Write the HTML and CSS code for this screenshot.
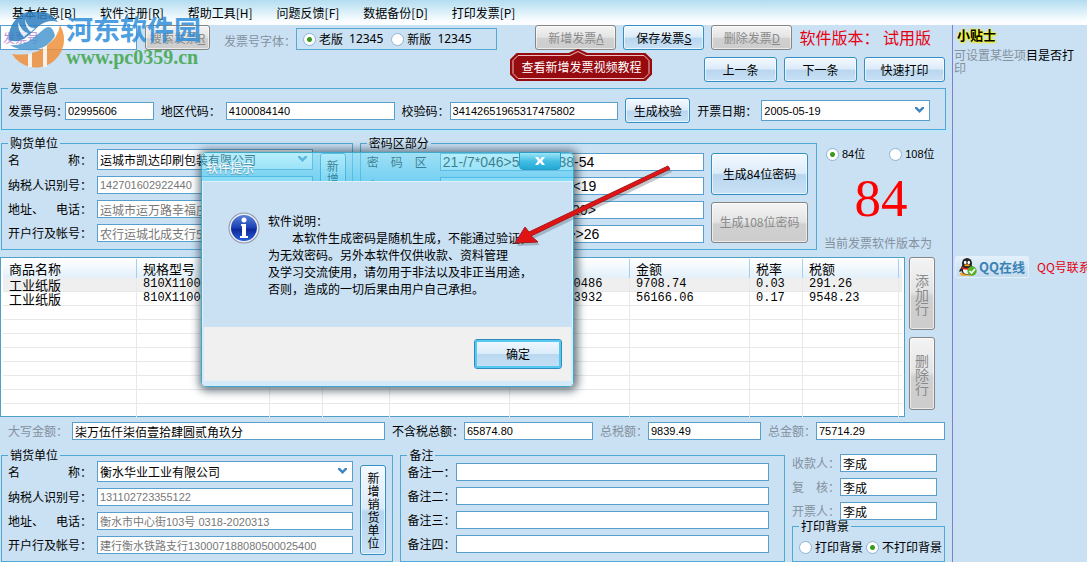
FILE: index.html
```html
<!DOCTYPE html>
<html lang="zh-CN">
<head>
<meta charset="utf-8">
<title>发票打印软件</title>
<link rel="stylesheet" href="styles.css">
</head>
<body>
<nav class="menu">
  <a href="#">基本信息[B]</a>
  <a href="#">软件注册[R]</a>
  <a href="#">帮助工具[H]</a>
  <a href="#">问题反馈[F]</a>
  <a href="#">数据备份[D]</a>
  <a href="#">打印发票[P]</a>
</nav>
<div class="app">
  <main class="main">
    <section class="toolbar">
      <div class="tools-left">
        <input class="search" type="text" value="发票号" aria-label="发票号">
        <button class="btn gray search-btn" type="button">搜索发票<u>R</u></button>
        <span class="dim font-label">发票号字体：</span>
        <div class="font-group">
          <label class="radio"><input type="radio" name="font" checked>老版&ensp;<span class="latin">12345</span></label>
          <label class="radio"><input type="radio" name="font">新版&ensp;<span class="latin">12345</span></label>
        </div>
      </div>
      <div class="tools-right">
        <div class="tool-row">
          <div class="anchor">
            <button class="btn gray w80" type="button" disabled>新增发票<u>A</u></button>
            <a class="bubble" href="#">
              <svg viewBox="0 0 142 32" width="142" height="32" aria-hidden="true">
                <path d="M7 5H59L68 1L77 5H135L141 11V25L135 31H7L1 25V11Z" fill="#960b10" stroke="#960b10" stroke-width="2"/>
                <path d="M8 6.500H60L68 2.500L76 6.500H134L139 11.500V24.500L134 29.500H8L3 24.500V11.500Z" fill="none" stroke="#eebcbc" stroke-width="1"/>
              </svg>
              <span>查看新增发票视频教程</span>
            </a>
          </div>
          <button class="btn w80" type="button">保存发票<u>S</u></button>
          <button class="btn gray w80" type="button" disabled>删除发票<u>D</u></button>
          <span class="version">软件版本：&nbsp;试用版</span>
        </div>
        <div class="tool-row">
          <button class="btn w73" type="button">上一条</button>
          <button class="btn w73" type="button">下一条</button>
          <button class="btn w80" type="button">快速打印</button>
        </div>
      </div>
    </section>

    <fieldset class="group info">
      <legend>发票信息</legend>
      <div class="info-grid">
        <label for="no">发票号码：</label>
        <input class="num" id="no" type="text" value="02995606">
        <label class="pad" for="area">地区代码：</label>
        <input class="num" id="area" type="text" value="4100084140">
        <label class="pad" for="check">校验码：</label>
        <input class="num" id="check" type="text" value="34142651965317475802">
        <button class="btn" type="button">生成校验</button>
        <label class="pad" for="date">开票日期：</label>
        <span class="combo"><select class="num" id="date"><option>2005-05-19</option></select><svg viewBox="0 0 9 6" width="9" height="6"><path d="M0 0H2L4.500 2.500L7 0H9V1.500L4.500 6L0 1.500Z" fill="#3f86c0"/></svg></span>
      </div>
    </fieldset>

    <section class="middle">
      <fieldset class="group buyer">
        <legend>购货单位</legend>
        <div class="party">
          <div class="party-grid">
            <label for="b1">名&emsp;&emsp;&emsp;&emsp;称：</label>
            <span class="combo"><select id="b1"><option>运城市凯达印刷包装有限公司</option></select><svg viewBox="0 0 9 6" width="9" height="6"><path d="M0 0H2L4.500 2.500L7 0H9V1.500L4.500 6L0 1.500Z" fill="#3f86c0"/></svg></span>
            <label for="b2">纳税人识别号：</label>
            <input class="soft num" id="b2" type="text" value="142701602922440">
            <label for="b3">地址、&emsp;电话：</label>
            <input class="soft" id="b3" type="text" value="运城市运万路幸福庄">
            <label for="b4">开户行及帐号：</label>
            <input class="soft" id="b4" type="text" value="农行运城北成支行5">
          </div>
          <button class="btn tall" type="button">新增购货单位</button>
        </div>
      </fieldset>
      <fieldset class="group cipher">
        <legend>密码区部分</legend>
        <div class="cipher-body">
          <div class="cipher-grid">
            <label for="c1">密&emsp;码&emsp;区</label>
            <input id="c1" type="text" value="21-/7*046&gt;51207438-54">
            <label for="c2">密&emsp;码&emsp;区</label>
            <input id="c2" type="text" value="341-05&gt;5954082974&lt;19">
            <label for="c3">密&emsp;码&emsp;区</label>
            <input id="c3" type="text" value="6027481935502716-20&gt;">
            <label for="c4">密&emsp;码&emsp;区</label>
            <input id="c4" type="text" value="8150392746108352&gt;&gt;26">
          </div>
          <div class="cipher-btns">
            <button class="btn" type="button">生成84位密码</button>
            <button class="btn gray" type="button" disabled>生成108位密码</button>
          </div>
        </div>
      </fieldset>
      <div class="digits">
        <div class="digit-row">
          <label class="radio"><input type="radio" name="bits" checked><span class="mix">84位</span></label>
          <label class="radio"><input type="radio" name="bits"><span class="mix">108位</span></label>
        </div>
        <div class="big">84</div>
        <div class="dim">当前发票软件版本为</div>
      </div>
    </section>

    <section class="goods">
      <div class="table-box">
        <table>
          <colgroup><col class="c-name"><col class="c-spec"><col class="c-unit"><col class="c-qty"><col class="c-price"><col class="c-price"><col class="c-price"><col class="c-unit"><col class="c-tax"><col></colgroup>
          <thead><tr><th>商品名称</th><th>规格型号</th><th></th><th></th><th></th><th></th><th>金额</th><th>税率</th><th>税额</th><th></th></tr></thead>
          <tbody>
            <tr class="on"><td class="cjk">工业纸版</td><td>810X1100</td><td></td><td></td><td></td><td>0.9708740486</td><td>9708.74</td><td>0.03</td><td>291.26</td><td></td></tr>
            <tr><td class="cjk">工业纸版</td><td>810X1100</td><td></td><td></td><td></td><td>5.6166063932</td><td>56166.06</td><td>0.17</td><td>9548.23</td><td></td></tr>
            <tr><td></td><td></td><td></td><td></td><td></td><td></td><td></td><td></td><td></td><td></td></tr>
            <tr><td></td><td></td><td></td><td></td><td></td><td></td><td></td><td></td><td></td><td></td></tr>
            <tr><td></td><td></td><td></td><td></td><td></td><td></td><td></td><td></td><td></td><td></td></tr>
            <tr><td></td><td></td><td></td><td></td><td></td><td></td><td></td><td></td><td></td><td></td></tr>
            <tr><td></td><td></td><td></td><td></td><td></td><td></td><td></td><td></td><td></td><td></td></tr>
            <tr><td></td><td></td><td></td><td></td><td></td><td></td><td></td><td></td><td></td><td></td></tr>
            <tr><td></td><td></td><td></td><td></td><td></td><td></td><td></td><td></td><td></td><td></td></tr>
            <tr class="last"><td></td><td></td><td></td><td></td><td></td><td></td><td></td><td></td><td></td><td></td></tr>
          </tbody>
        </table>
      </div>
      <div class="row-btns">
        <button class="btn gray" type="button">添加行</button>
        <button class="btn gray" type="button">删除行</button>
      </div>
    </section>

    <section class="totals">
      <label class="dim" for="t1">大写金额：</label>
      <input id="t1" type="text" value="柒万伍仟柒佰壹拾肆圆贰角玖分">
      <label class="pad" for="t2">不含税总额：</label>
      <input class="num" id="t2" type="text" value="65874.80">
      <label class="pad dim" for="t3">总税额：</label>
      <input class="num" id="t3" type="text" value="9839.49">
      <label class="pad dim" for="t4">总金额：</label>
      <input class="num" id="t4" type="text" value="75714.29">
    </section>

    <section class="bottom">
      <fieldset class="group seller">
        <legend>销货单位</legend>
        <div class="party">
          <div class="party-grid">
            <label for="s1">名&emsp;&emsp;&emsp;&emsp;称：</label>
            <span class="combo"><select id="s1"><option>衡水华业工业有限公司</option></select><svg viewBox="0 0 9 6" width="9" height="6"><path d="M0 0H2L4.500 2.500L7 0H9V1.500L4.500 6L0 1.500Z" fill="#3f86c0"/></svg></span>
            <label for="s2">纳税人识别号：</label>
            <input class="soft num" id="s2" type="text" value="131102723355122">
            <label for="s3">地址、&emsp;电话：</label>
            <input class="soft num" id="s3" type="text" value="衡水市中心街103号 0318-2020313">
            <label for="s4">开户行及帐号：</label>
            <input class="soft num" id="s4" type="text" value="建行衡水铁路支行130007188080500025400">
          </div>
          <button class="btn tall" type="button">新增销货单位</button>
        </div>
      </fieldset>
      <fieldset class="group notes">
        <legend>备注</legend>
        <div class="notes-grid">
          <label for="n1">备注一：</label><input id="n1" type="text">
          <label for="n2">备注二：</label><input id="n2" type="text">
          <label for="n3">备注三：</label><input id="n3" type="text">
          <label for="n4">备注四：</label><input id="n4" type="text">
        </div>
      </fieldset>
      <div class="signers">
        <div class="sign-grid">
          <label class="dim" for="p1">收款人：</label><input id="p1" type="text" value="李成">
          <label class="dim" for="p2">复&emsp;核：</label><input id="p2" type="text" value="李成">
          <label class="dim" for="p3">开票人：</label><input id="p3" type="text" value="李成">
        </div>
        <fieldset class="group print">
          <legend>打印背景</legend>
          <div class="print-row">
            <label class="radio"><input type="radio" name="bg">打印背景</label>
            <label class="radio"><input type="radio" name="bg" checked>不打印背景</label>
          </div>
        </fieldset>
      </div>
    </section>
  </main>

  <aside class="side">
    <h2>小贴士</h2>
    <p><span class="dim">可设置某些项</span>目是否打<span class="dim">印</span></p>
    <div class="contact">
      <a class="qq" href="#">
        <svg viewBox="0 0 18 18" width="18" height="18" aria-hidden="true">
          <ellipse cx="5" cy="16" rx="4" ry="1.800" fill="#f0a020"/><ellipse cx="11" cy="16" rx="4" ry="1.800" fill="#f0a020"/>
          <path d="M2 10C0 12 0 14 1 14L3 12ZM14 10C16 12 16 14 15 14L13 12Z" fill="#222"/>
          <ellipse cx="8" cy="11" rx="6" ry="5.500" fill="#222"/><ellipse cx="8" cy="12" rx="4" ry="4" fill="#fff"/>
          <ellipse cx="8" cy="5.500" rx="5" ry="5.500" fill="#222"/>
          <ellipse cx="6.200" cy="4.500" rx="1.300" ry="1.800" fill="#fff"/><ellipse cx="9.800" cy="4.500" rx="1.300" ry="1.800" fill="#fff"/>
          <ellipse cx="8" cy="7.300" rx="3" ry="1" fill="#f0a020"/>
          <path d="M2.500 8.500Q8 11.500 13.500 8.500V10.500Q8 13 2.500 10.500Z" fill="#dc2020"/>
          <circle cx="13" cy="13" r="4.700" fill="#56b12c"/><path d="M10.500 13L12.500 15L16 11" fill="none" stroke="#fff" stroke-width="1.700"/>
        </svg>
        <span>QQ在线</span>
      </a>
      <span class="red">QQ号联系</span>
    </div>
  </aside>
</div>

<div class="mark">
  <svg class="mark-logo" viewBox="0 0 58 58" width="58" height="58" aria-hidden="true">
    <path d="M1 28A27 27 0 0 1 50 10C44 8 38 9 32 13L21 23C15 28 9 31 1 28Z" fill="#2f7fc0"/>
    <path d="M24 27L36 17Q44 11 47 24Q40 36 26 38Q10 39 2 33Q14 34 24 27Z" fill="#4a97d0"/>
    <path d="M10 10Q14 20 20 21L16 25Q10 20 10 10ZM17 7Q20 17 27 16L23 20Q17 16 17 7Z" fill="#e8f3fb"/>
    <path d="M52 13A27 27 0 0 1 4 42Q12 43 20 42V53H24V41Q30 40 35 36V53H39V33Q50 26 52 13Z" fill="#f0913c"/>
    <path d="M20 42L24 41V55H20ZM35 36L39 33V55H35Z" fill="#fff5e8"/>
  </svg>
  <div class="mark-text"><b class="mark-name">河东软件园</b><b class="mark-url">www.pc0359.cn</b></div>
</div>

<div class="dialog" role="dialog" aria-label="软件提示">
  <div class="dialog-title">软件提示<button class="close" type="button" aria-label="关闭"><svg viewBox="0 0 10 8" width="10" height="8"><path d="M0 0H3L5 2.500L7 0H10L7 4L10 8H7L5 5.500L3 8H0L3 4Z" fill="#fff"/></svg></button></div>
  <div class="dialog-body">
    <svg class="info-icon" viewBox="0 0 32 32" width="32" height="32" aria-hidden="true">
      <defs><linearGradient id="ball" x1="0" y1="0" x2="0" y2="1"><stop offset="0" stop-color="#5b82d8"/><stop offset=".5" stop-color="#1a3fb4"/><stop offset=".55" stop-color="#0c2899"/><stop offset="1" stop-color="#2a5fd6"/></linearGradient></defs>
      <circle cx="16" cy="16" r="15.500" fill="#8a96a8"/><circle cx="16" cy="16" r="14.500" fill="#e8edf4"/><circle cx="16" cy="16" r="13" fill="url(#ball)"/>
      <circle cx="16" cy="8" r="2.500" fill="#fff"/><path d="M13 12H18V24H20V26H12V24H14V14H13Z" fill="#fff"/>
    </svg>
    <p>软件说明：<br>&emsp;&emsp;本软件生成密码是随机生成，不能通过验证，<br>为无效密码。另外本软件仅供收款、资料管理<br>及学习交流使用，请勿用于非法以及非正当用途，<br>否则，造成的一切后果由用户自己承担。</p>
  </div>
  <div class="dialog-foot"><button class="ok" type="button">确定</button></div>
</div>

<svg class="arrow" viewBox="0 0 164 86" width="164" height="86" aria-hidden="true">
  <path d="M4 79L14 63L18 68L157 2L159 5L20 72L27 78Z" fill="#50606e" opacity=".35" transform="translate(2 3)"/>
  <path d="M4 79L14 63L18 68L157 2L159 5L20 72L27 78Z" fill="#e01414" stroke="#a51c1c" stroke-width="1"/>
</svg>
</body>
</html>
```

FILE: styles.css
```css
* { box-sizing: border-box; }

body {
  margin: 0;
  min-height: 100vh;
  display: flex;
  flex-direction: column;
  position: relative;
  overflow: hidden;
  background: #cae0f3;
  color: #000;
  font: 12px/14px "Noto Sans CJK SC", sans-serif;
}

a { color: inherit; text-decoration: none; }
label, legend, th, td, button { white-space: nowrap; }

.menu {
  display: flex;
  gap: 24px;
  height: 25px;
  padding: 0 12px;
  line-height: 25px;
  background: linear-gradient(#b3dcf1, #d9eff9 45%, #fbfdff 85%);
}

.app { flex: 1; display: flex; }
.main { flex: 1; min-width: 0; }
.dim { color: #84919e; }
.latin { font-family: "Noto Sans", sans-serif; }

input, select, button { font: inherit; color: inherit; margin: 0; }

input[type="text"], select {
  width: 100%;
  min-width: 0;
  height: 18px;
  padding: 0 2px;
  border: 1px solid #589fce;
  border-radius: 0;
  background: #fff;
  outline: 0;
}

input.num, select.num { font-family: "Liberation Sans", "Noto Sans CJK SC", sans-serif; font-size: 11px; }
input.soft { color: #777; }
select { height: 21px; appearance: none; }
.combo { position: relative; display: block; }
.combo svg { position: absolute; right: 6px; top: 7px; }

.btn {
  height: 25px;
  padding: 0;
  border: 1px solid #3390c5;
  border-radius: 3px;
  background: linear-gradient(#f3f9fe, #dcebf9 48%, #b9d6ef 52%, #c9e1f5);
  box-shadow: inset 0 0 0 1px rgba(255, 255, 255, .6);
}

.btn.gray {
  border-color: #858585;
  color: #8a8a8a;
  background: linear-gradient(#f4f4f4, #e4e4e4 48%, #d0d0d0 55%, #cdcdcd);
}

.w80 { width: 81px; }
.w73 { width: 73px; }

.radio { display: flex; align-items: center; }

.radio input {
  flex: none;
  width: 13px;
  height: 13px;
  margin-right: 3px;
  appearance: none;
  border: 1px solid #8db4d4;
  border-radius: 50%;
  background: #fff;
}

.radio input:checked { background: radial-gradient(circle, #3c9a1c 2px, #fff 3px); }

.toolbar { display: flex; justify-content: space-between; padding-right: 7px; }
.tools-left { display: flex; align-items: flex-start; }
input.search { width: 137px; height: 25px; color: #b98ad6; }
.search-btn { width: 65px; margin-left: 8px; }
.font-label { margin: 9px 0 0 14px; }

.font-group {
  display: flex;
  gap: 8px;
  height: 22px;
  width: 201px;
  margin-top: 3px;
  padding-left: 6px;
  border: 1px solid #55a9d4;
  white-space: nowrap;
}

.tools-right { display: flex; flex-direction: column; gap: 7px; }
.tool-row { display: flex; justify-content: flex-end; gap: 7px; }
.tool-row:first-child { padding-right: 14px; }
.version { color: #e60012; font-size: 16px; line-height: 25px; white-space: nowrap; }

.anchor { position: relative; }
.bubble { position: absolute; left: -25px; top: 24px; width: 142px; height: 32px; }
.bubble svg { display: block; }
.bubble span { position: absolute; inset: 11px 0 auto; text-align: center; color: #fff; white-space: nowrap; }

.group { min-width: 0; margin: 0; padding: 0; border: 1px solid #4fa9d6; }
.group legend { margin-left: 6px; padding: 0 2px; line-height: 12px; }
.pad { padding-left: 7px; }

.info { margin: 0 6px 0 1px; }

.info-grid {
  display: grid;
  grid-template-columns: 57px 89fr 72px 169fr 55px 169fr 72px 71px 169fr;
  align-items: center;
  padding: 4px 15px 6px 6px;
}

.info-grid .btn { margin-left: 7px; }

.middle { display: flex; padding: 5px 0 0 1px; border-top: 2px solid #bfe6fa; gap: 7px; }
.buyer { flex: 352; }
.cipher { flex: 458; }

.party { display: flex; gap: 7px; padding: 0 6px 6px; }

.party-grid {
  flex: 1;
  min-width: 0;
  display: grid;
  grid-template-columns: 89px 1fr;
  grid-template-rows: 21px 18px 18px 18px;
  row-gap: 6px;
  align-items: center;
}

.btn.tall { width: 26px; height: 90px; margin-top: 4px; padding: 0 6px; white-space: normal; line-height: 13px; }

.cipher-body { display: flex; gap: 7px; padding: 4px 8px 6px 6px; }

.cipher-grid {
  flex: 1;
  min-width: 0;
  display: grid;
  grid-template-columns: 73px 1fr;
  row-gap: 6px;
  align-items: center;
}

.cipher-grid input { font-family: "Liberation Sans", sans-serif; font-size: 14px; }
.cipher-btns { display: flex; flex-direction: column; gap: 7px; width: 97px; }
.cipher-btns .btn { flex: 1; }

.digits { width: 128px; padding-top: 10px; }
.digit-row { display: flex; gap: 24px; padding-left: 2px; }
.mix { font-family: "Liberation Sans", "Noto Sans CJK SC", sans-serif; font-size: 11px; }
.big { margin: 9px 14px 9px 0; text-align: center; color: #f00; font: 53px/57px "Liberation Serif", serif; }

.goods { display: flex; gap: 4px; margin-top: 7px; padding-right: 17px; }
.table-box { flex: 1; min-width: 0; height: 160px; padding: 1px 2px; border: 1px solid #4f9fc8; background: #fff; }

table { width: 100%; table-layout: fixed; border-collapse: separate; border-spacing: 0; }
.c-name { width: 134px; }
.c-spec { width: 133px; }
.c-unit { width: 53px; }
.c-qty { width: 67px; }
.c-price { width: 120px; }
.c-tax { width: 96px; }

th {
  height: 19px;
  padding: 0 0 0 6px;
  text-align: left;
  font-weight: 400;
  font-size: 13px;
  background: linear-gradient(#fff, #eef6fc 60%, #e2eff9);
  border-right: 1px solid #a9cfe8;
}

td {
  height: 14px;
  padding: 0 0 0 6px;
  border-right: 1px solid #e8e8e8;
  border-bottom: 1px solid #e8e8e8;
  font: 12px/13px "Liberation Mono", monospace;
}

td.cjk { font: 13px/13px "Noto Sans CJK SC", sans-serif; }
th:last-child, td:last-child { padding: 0; border-right: 0; }
.on td { background: #efefef; }
.last td { border-bottom: 0; }

.row-btns { display: flex; flex-direction: column; gap: 7px; }
.row-btns .btn { width: 26px; height: 73px; padding: 0 5px; font-size: 14px; line-height: 14px; white-space: normal; }

.totals {
  display: grid;
  grid-template-columns: 64px 313fr 79px 129fr 55px 113fr 55px 129fr;
  align-items: center;
  margin-top: 5px;
  padding: 0 7px 0 8px;
}

.bottom { display: flex; gap: 7px; margin-top: 9px; padding: 0 7px 0 1px; }
.seller { flex: 393; }
.notes { flex: 385; }
.notes-grid { display: grid; grid-template-columns: 49px 1fr; row-gap: 6px; align-items: center; padding: 2px 15px 6px 6px; }
.signers { flex: 0 0 153px; display: flex; flex-direction: column; padding-top: 5px; }
.sign-grid { display: grid; grid-template-columns: 48px 1fr; row-gap: 6px; align-items: center; padding-right: 8px; }
.print { flex: 1; }
.print-row { display: flex; gap: 3px; padding: 8px 0 0 6px; }

.side { width: 135px; padding: 1px 0 0 1px; border-left: 1px solid #7c7fd4; overflow: hidden; }
.side h2 { margin: 2px 0 0 3px; font-size: 13px; line-height: 14px; text-shadow: 0 0 2px #ff0, 0 0 2px #ff0, 1px 1px 2px #f5e800; }
.side p { margin: 6px 0 0; padding-right: 10px; line-height: 13px; }
.contact { display: flex; align-items: center; gap: 8px; margin: 182px 0 0 1px; white-space: nowrap; }

.qq {
  flex: none;
  display: flex;
  align-items: center;
  gap: 2px;
  width: 74px;
  height: 22px;
  padding-left: 3px;
  border: 1px solid #e3f0fa;
  border-radius: 2px;
  background: linear-gradient(#e2f0fb, #c3dbee);
  color: #3b82b4;
  font-weight: 700;
  font-size: 13px;
}

.red { color: #e60012; }

.mark { position: absolute; left: 8px; top: 12px; display: flex; opacity: .85; pointer-events: none; }
.mark-text { display: flex; flex-direction: column; }
.mark-name { color: #2f8fdb; font-size: 27px; line-height: 34px; }
.mark-url { color: #3ea648; font: 700 20px/22px "Liberation Serif", serif; }

.dialog {
  position: absolute;
  left: 201px;
  top: 152px;
  width: 373px;
  border: 1px solid #3fa9c9;
  border-radius: 5px;
  box-shadow: 1px 1px 8px 3px rgba(30, 50, 65, .65);
}

.dialog-title {
  position: relative;
  height: 28px;
  padding: 8px 4px 0;
  line-height: 14px;
  color: #fff;
  background: linear-gradient(rgba(125, 224, 248, .55), rgba(70, 200, 240, .65));
  text-shadow: 0 1px 1px #4a8ca8;
  border-radius: 4px 4px 0 0;
}

.close {
  position: absolute;
  right: 12px;
  top: -1px;
  width: 42px;
  height: 18px;
  padding: 0;
  border: 1px solid #2b9cc4;
  border-radius: 0 0 4px 4px;
  background: linear-gradient(#9be4f7, #45bfe4 50%, #22a9d6);
}

.close svg { display: block; margin: auto; }

.dialog-body {
  display: flex;
  align-items: flex-start;
  gap: 8px;
  height: 146px;
  padding: 30px 0 0 25px;
  border-left: 1px solid #e0f3fd;
  border-right: 1px solid #e0f3fd;
  border-top: 1px solid #dff2fc;
  background: #cae0f3;
}

.dialog-body p { margin: 0; line-height: 17px; white-space: nowrap; }

.dialog-foot {
  display: flex;
  justify-content: flex-end;
  height: 59px;
  padding: 12px 9px 0 0;
  border: 1px solid #d4eaf9;
  border-width: 0 2px 5px;
  border-radius: 0 0 4px 4px;
  background: #f0f0f0;
}

.ok {
  width: 88px;
  height: 30px;
  border: 1px solid #2f8dbb;
  border-radius: 3px;
  background: linear-gradient(#f0f8fe, #dcecfa 48%, #b9d8f0 52%, #c6e0f5);
  box-shadow: inset 0 0 0 2px #56c8f2;
}

.arrow { position: absolute; left: 511px; top: 164px; pointer-events: none; }
```
